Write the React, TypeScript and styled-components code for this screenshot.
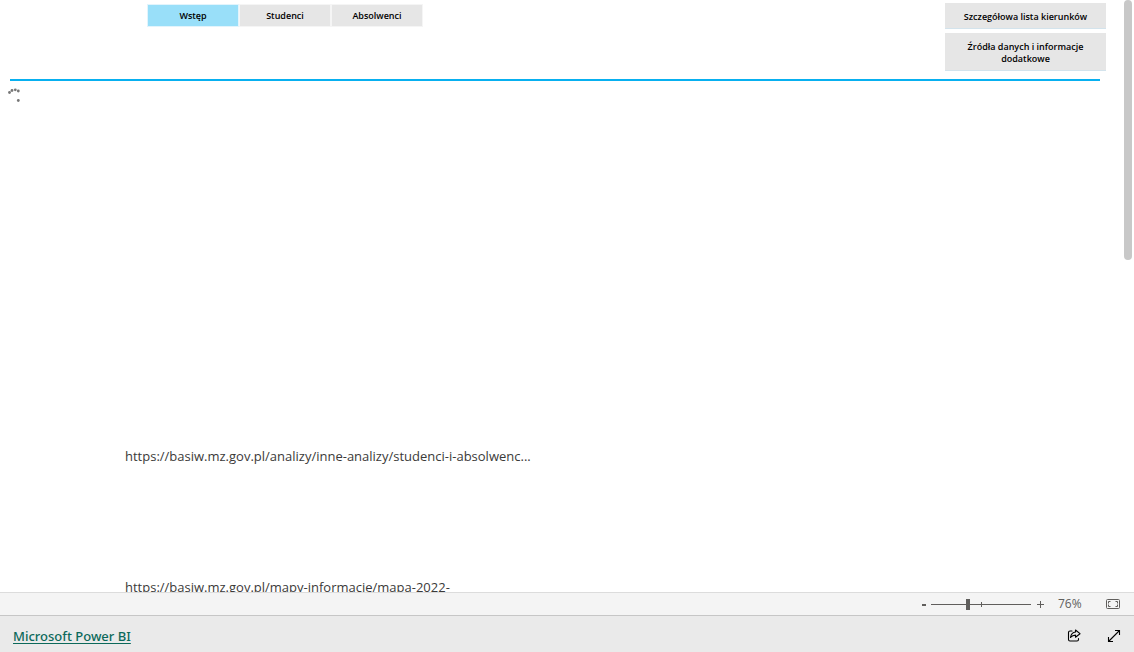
import React from "react";
import styled, { createGlobalStyle } from "styled-components";

const GlobalStyle = createGlobalStyle`
  *, *::before, *::after { box-sizing: border-box; }
  body {
    margin: 0;
    background: #fff;
    font-family: "Segoe UI", "Open Sans", "Noto Sans", sans-serif;
  }
  button { font-family: "Segoe UI", "Open Sans", "Noto Sans", sans-serif; }
`;

const Shell = styled.div`
  display: flex;
  flex-direction: column;
  height: 100vh;
`;

const Viewport = styled.div`
  flex: 1;
  min-height: 0;
  display: flex;
  overflow: hidden;
`;

const Report = styled.main`
  flex: 1;
  min-width: 0;
  padding-left: 8px;
`;

const ScrollTrack = styled.div`
  width: 10px;
  flex: none;
`;

const ScrollThumb = styled.div`
  width: 8px;
  height: 44%;
  border-radius: 4px;
  background: #c8c8c8;
`;

const Header = styled.header`
  display: flex;
  justify-content: space-between;
  align-items: flex-start;
  height: 81px;
  margin-left: 2px;
  margin-right: 24px;
  border-bottom: 2px solid #08b0f0;
`;

const Tabs = styled.nav`
  display: flex;
  gap: 2px;
  padding: 5px 0 0 138px;
`;

const Tab = styled.button<{ $active?: boolean }>`
  width: 90px;
  height: 21px;
  padding: 0;
  border: 0;
  outline: 1px solid ${(p) => (p.$active ? "#e2f4fc" : "#f5f5f5")};
  background: ${(p) => (p.$active ? "#99dff9" : "#e6e6e6")};
  color: #000;
  font-size: 9px;
  line-height: 12px;
  font-weight: 600;
`;

const Actions = styled.div`
  display: flex;
  flex-direction: column;
  gap: 4px;
  padding-top: 3px;
  margin-right: -6px;
`;

const ActionButton = styled.button`
  width: 161px;
  padding: 8px 16px 5px;
  border: 0;
  border-bottom: 1px solid #d3e3ec;
  background: #e6e6e6;
  color: #000;
  font-size: 9px;
  line-height: 12px;
  font-weight: 600;
`;

const Spinner = styled.svg`
  display: block;
  width: 14px;
  height: 16px;
  margin-top: 7px;
`;

const Links = styled.div`
  display: flex;
  flex-direction: column;
  align-items: flex-start;
  gap: 111px;
  padding: 342px 0 0 117px;
`;

const ReportLink = styled.a`
  color: #3b3a39;
  font-size: 13px;
  line-height: 20px;
  text-decoration: none;
  white-space: nowrap;
`;

const ZoomBar = styled.div`
  display: flex;
  flex: none;
  align-items: center;
  justify-content: flex-end;
  height: 23px;
  padding-right: 13px;
  border-top: 1px solid #dcdcdc;
  background: #f4f4f4;
  color: #605e5c;
`;

const IconButton = styled.button`
  display: flex;
  align-items: center;
  justify-content: center;
  padding: 0;
  border: 0;
  background: none;
  color: inherit;
  svg { display: block; }
`;

const StepButton = styled(IconButton)`
  width: 14px;
  height: 20px;
`;

const ZoomSlider = styled.input`
  appearance: none;
  width: 100px;
  height: 12px;
  margin: 0;
  background:
    linear-gradient(#605e5c, #605e5c) 50px 4px / 1px 5px no-repeat,
    linear-gradient(#605e5c, #605e5c) 0 6px / 100% 1px no-repeat;
  &::-webkit-slider-thumb {
    appearance: none;
    width: 4px;
    height: 11px;
    background: #605e5c;
  }
`;

const ZoomValue = styled.output`
  width: 40px;
  margin-left: 13px;
  margin-right: 7px;
  font-size: 12px;
  line-height: 20px;
`;

const Footer = styled.footer`
  display: flex;
  flex: none;
  align-items: center;
  justify-content: space-between;
  height: 37px;
  padding: 3px 13px 0;
  border-top: 1px solid #c6c6c6;
  background: #eaeaea;
`;

const BrandLink = styled.a`
  color: #0c695a;
  font-family: "Segoe UI", "Noto Sans", sans-serif;
  font-size: 13px;
  font-weight: 500;
  line-height: 20px;
  text-underline-offset: 2px;
`;

const FooterActions = styled.div`
  display: flex;
  gap: 26px;
  color: #000;
`;

const dots = [
  [1.5, 4.5],
  [4, 2.5],
  [7.3, 1.8],
  [10.3, 3],
  [10.3, 12.5],
];

export default function App() {
  return (
    <Shell>
      <GlobalStyle />
      <Viewport>
        <Report>
          <Header>
            <Tabs>
              <Tab $active>Wstęp</Tab>
              <Tab>Studenci</Tab>
              <Tab>Absolwenci</Tab>
            </Tabs>
            <Actions>
              <ActionButton>Szczegółowa lista kierunków</ActionButton>
              <ActionButton>Źródła danych i informacje dodatkowe</ActionButton>
            </Actions>
          </Header>
          <Spinner viewBox="0 0 14 16" aria-hidden="true" fill="#777">
            {dots.map(([x, y]) => (
              <circle key={`${x}-${y}`} cx={x} cy={y} r="1.4" />
            ))}
          </Spinner>
          <Links>
            <ReportLink href="#analizy">
              https://basiw.mz.gov.pl/analizy/inne-analizy/studenci-i-absolwenc...
            </ReportLink>
            <ReportLink href="#mapy">https://basiw.mz.gov.pl/mapy-informacje/mapa-2022-</ReportLink>
          </Links>
        </Report>
        <ScrollTrack>
          <ScrollThumb />
        </ScrollTrack>
      </Viewport>
      <ZoomBar>
        <StepButton aria-label="Pomniejsz">
          <svg width="14" height="14" viewBox="0 0 14 14" stroke="currentColor" strokeWidth="2">
            <path d="M5 8h4" />
          </svg>
        </StepButton>
        <ZoomSlider type="range" min={0} max={96} defaultValue={35} aria-label="Powiększenie" />
        <StepButton aria-label="Powiększ">
          <svg width="14" height="14" viewBox="0 0 14 14" stroke="currentColor">
            <path d="M6 7.5h7M9.5 4v7" />
          </svg>
        </StepButton>
        <ZoomValue>76%</ZoomValue>
        <IconButton aria-label="Dopasuj do strony">
          <svg width="16" height="12" viewBox="0 0 16 12" fill="none" stroke="currentColor">
            <rect x="1.5" y="1.5" width="13" height="9" rx="1" />
            <path d="M5.5 3.5h-2v2M10.5 3.5h2v2M5.5 8.5h-2v-2M10.5 8.5h2v-2" />
          </svg>
        </IconButton>
      </ZoomBar>
      <Footer>
        <BrandLink href="#powerbi">Microsoft Power BI</BrandLink>
        <FooterActions>
          <IconButton aria-label="Udostępnij">
            <svg width="14" height="14" viewBox="0 0 14 14" fill="none" stroke="currentColor" strokeWidth="1.1" strokeLinejoin="round" strokeLinecap="round">
              <path d="M5 2H3a1.500 1.500 0 0 0-1.500 1.500v7A1.500 1.500 0 0 0 3 12h7a1.500 1.500 0 0 0 1.500-1.500v-1" />
              <path d="M8.500 1v2C5.500 3.200 4 5 3.500 8.500 5 6.700 6.500 6.100 8.500 6.100v2.200L13 4.700z" />
            </svg>
          </IconButton>
          <IconButton aria-label="Pełny ekran">
            <svg width="14" height="14" viewBox="0 0 14 14" fill="none" stroke="currentColor" strokeWidth="1.1">
              <path d="M1.500 12.500l11-11M8 1.500h4.500V6M1.500 8v4.500H6" />
            </svg>
          </IconButton>
        </FooterActions>
      </Footer>
    </Shell>
  );
}
